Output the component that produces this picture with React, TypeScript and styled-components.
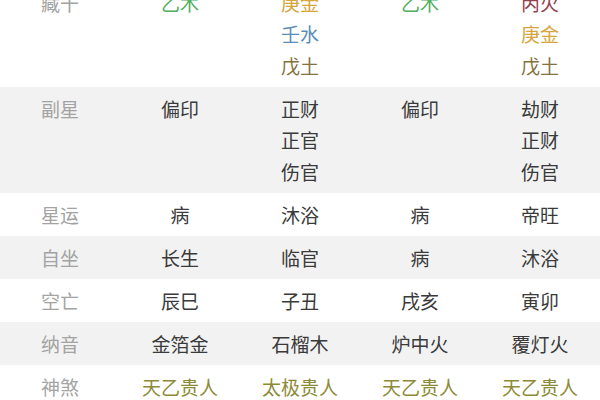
import React from "react";
import styled, { createGlobalStyle } from "styled-components";

type Cell = { text: string; color?: string };
type Row = { label: string; cells: Cell[][]; shaded?: boolean };

const C = {
  wood: "#4fae5c",
  metal: "#d6a53c",
  water: "#5b8db5",
  earth: "#84723e",
  fire: "#94404e",
  star: "#8c8a36",
};

const t = (text: string, color?: string): Cell => ({ text, color });

const rows: Row[] = [
  {
    label: "藏干",
    cells: [
      [t("乙木", C.wood)],
      [t("庚金", C.metal), t("壬水", C.water), t("戊土", C.earth)],
      [t("乙木", C.wood)],
      [t("丙火", C.fire), t("庚金", C.metal), t("戊土", C.earth)],
    ],
  },
  {
    label: "副星",
    shaded: true,
    cells: [
      [t("偏印")],
      [t("正财"), t("正官"), t("伤官")],
      [t("偏印")],
      [t("劫财"), t("正财"), t("伤官")],
    ],
  },
  { label: "星运", cells: [[t("病")], [t("沐浴")], [t("病")], [t("帝旺")]] },
  { label: "自坐", shaded: true, cells: [[t("长生")], [t("临官")], [t("病")], [t("沐浴")]] },
  { label: "空亡", cells: [[t("辰巳")], [t("子丑")], [t("戌亥")], [t("寅卯")]] },
  {
    label: "纳音",
    shaded: true,
    cells: [[t("金箔金")], [t("石榴木")], [t("炉中火")], [t("覆灯火")]],
  },
  {
    label: "神煞",
    cells: [
      [t("天乙贵人", C.star)],
      [t("太极贵人", C.star)],
      [t("天乙贵人", C.star)],
      [t("天乙贵人", C.star)],
    ],
  },
];

const GlobalStyle = createGlobalStyle`
  html, body {
    margin: 0;
    padding: 0;
    background: #ffffff;
  }
  body {
    font-family: "Noto Sans CJK SC", "Noto Sans", sans-serif;
  }
`;

// the screenshot is a scrolled view: the first row starts above the top edge
const Viewport = styled.div`
  width: 600px;
  height: 400px;
  overflow: hidden;
  background: #ffffff;
`;

const Table = styled.div`
  margin-top: -19px;
  display: flex;
  flex-direction: column;
`;

const RowBox = styled.div<{ $shaded?: boolean }>`
  display: grid;
  grid-template-columns: repeat(5, 120px);
  padding: 5.75px 0;
  background: ${(p) => (p.$shaded ? "#f2f2f2" : "#ffffff")};
`;

const Column = styled.div`
  display: flex;
  flex-direction: column;
  align-items: center;
`;

const Label = styled.div`
  font-size: 19px;
  line-height: 31.5px;
  color: #a3a3a3;
`;

const Value = styled.div<{ $color?: string }>`
  font-size: 19px;
  line-height: 31.5px;
  color: ${(p) => p.$color || "#3a3a3a"};
`;

export default function App() {
  return (
    <>
      <GlobalStyle />
      <Viewport>
        <Table>
          {rows.map((row) => (
            <RowBox key={row.label} $shaded={row.shaded}>
              <Column>
                <Label>{row.label}</Label>
              </Column>
              {row.cells.map((col, i) => (
                <Column key={i}>
                  {col.map((c, j) => (
                    <Value key={j} $color={c.color}>
                      {c.text}
                    </Value>
                  ))}
                </Column>
              ))}
            </RowBox>
          ))}
        </Table>
      </Viewport>
    </>
  );
}
